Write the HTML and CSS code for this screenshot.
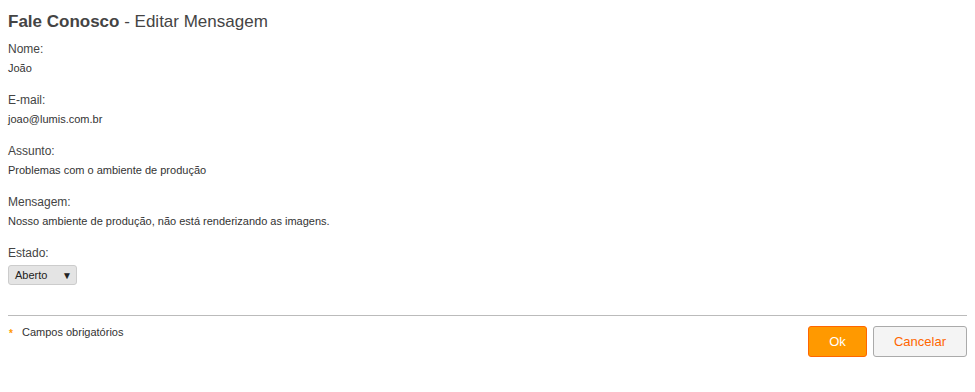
FILE: index.html
```html
<!DOCTYPE html>
<html lang="pt-BR">
<head>
    <meta charset="UTF-8">
    <title>Fale Conosco - Editar Mensagem</title>
    <link rel="stylesheet" href="styles.css">
</head>
<body>
    <h1 class="title"><strong>Fale Conosco</strong> - Editar Mensagem</h1>

    <div class="field">
        <div class="field-label">Nome:</div>
        <div class="field-value">João</div>
    </div>
    <div class="field">
        <div class="field-label">E-mail:</div>
        <div class="field-value">joao@lumis.com.br</div>
    </div>
    <div class="field">
        <div class="field-label">Assunto:</div>
        <div class="field-value">Problemas com o ambiente de produção</div>
    </div>
    <div class="field">
        <div class="field-label">Mensagem:</div>
        <div class="field-value">Nosso ambiente de produção, não está renderizando as imagens.</div>
    </div>
    <div class="field">
        <div class="field-label">Estado:</div>
        <div class="select">
            <span>Aberto</span>
            <span class="select-arrow">&#9660;</span>
        </div>
    </div>

    <div class="footer">
        <div class="required"><span class="star">*</span> Campos obrigatórios</div>
        <div class="buttons">
            <button class="btn btn-ok">Ok</button>
            <button class="btn btn-cancel">Cancelar</button>
        </div>
    </div>
</body>
</html>
```

FILE: styles.css
```css
body {
    margin: 0;
    padding: 8px;
    font-family: "Liberation Sans", Arial, sans-serif;
    color: #333;
    background-color: #fff;
}
.title {
    font-size: 17px;
    font-weight: normal;
    color: #444;
    margin: 3px 0 9px 0;
    line-height: 22px;
}
.title strong {
    font-weight: bold;
}
.field {
    margin-bottom: 17px;
}
.field-label {
    font-size: 12px;
    color: #444;
    line-height: 15px;
    margin-bottom: 4px;
}
.field-value {
    font-size: 11px;
    color: #333;
    line-height: 15px;
}
.select {
    display: flex;
    justify-content: space-between;
    align-items: center;
    width: 56px;
    height: 18px;
    padding: 0 5px 0 6px;
    border: 1px solid #ccc;
    border-radius: 3px;
    background-color: #e4e4e4;
    font-size: 11px;
    color: #222;
}
.select-arrow {
    font-size: 10px;
    margin-right: -1px;
}
.footer {
    margin-top: 30px;
    border-top: 1px solid #bbb;
    display: flex;
    justify-content: space-between;
    align-items: flex-start;
    padding-top: 10px;
}
.required {
    font-size: 11px;
    color: #333;
}
.star {
    color: #f90;
    font-weight: bold;
    font-size: 10px;
    margin-right: 6px;
    margin-left: 1px;
    vertical-align: -1px;
}
.buttons {
    display: flex;
    gap: 6px;
}
.btn {
    font-family: "Liberation Sans", Arial, sans-serif;
    font-size: 13px;
    height: 31px;
    border-radius: 3px;
    cursor: pointer;
}
.btn-ok {
    width: 59px;
    background-color: #f90;
    border: 1px solid #f60;
    color: #fff;
}
.btn-cancel {
    width: 94px;
    background-color: #f4f4f4;
    border: 1px solid #aaa;
    color: #f60;
}
```
